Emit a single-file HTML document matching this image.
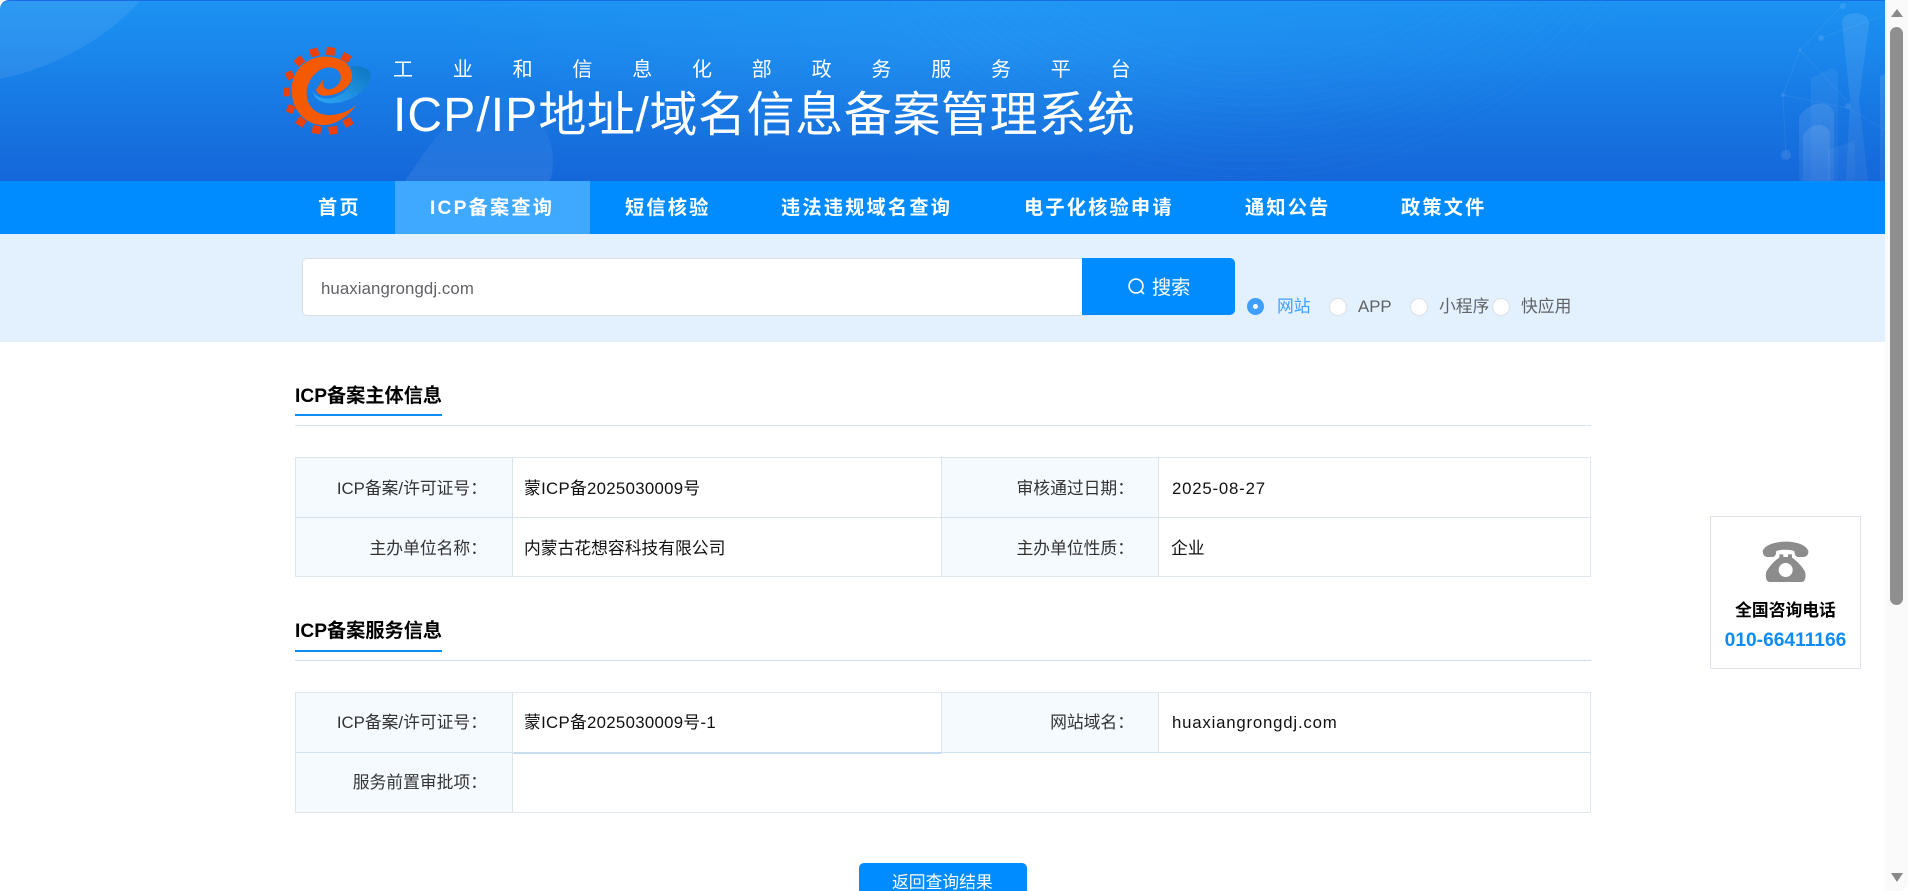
<!DOCTYPE html>
<html lang="zh-CN">
<head>
<meta charset="utf-8">
<title>ICP/IP地址/域名信息备案管理系统</title>
<style>
html,body{margin:0;padding:0;width:1908px;height:891px;overflow:hidden;background:#fff;}
body{position:relative;font-family:"Liberation Sans","Noto Sans CJK SC",sans-serif;color:#111;}
.a{position:absolute;white-space:nowrap;}
#hdr{left:0;top:0;width:1885px;height:181px;overflow:hidden;border-top-left-radius:9px;background:linear-gradient(180deg,#1b92f2 0%,#1a86ec 30%,#1775e1 65%,#1567d9 100%);border-top:1px solid #1a6ce2;box-sizing:border-box;}
#nav{left:0;top:181px;width:1885px;height:53px;background:#008cff;}
.n{top:181px;height:53px;line-height:55px;font-size:19.2px;font-weight:700;color:#fff;letter-spacing:2.2px;}
#band{left:0;top:234px;width:1885px;height:108px;background:#e3f1ff;}
.r{width:16px;height:16px;border-radius:50%;background:#fff;border:1px solid #dcdfe6;top:298px;}
.rl{top:295px;font-size:16.8px;line-height:24px;color:#606266;}
.t{font-size:19.2px;font-weight:700;color:#000;line-height:26px;}
.c{font-size:16.8px;line-height:24px;}
.lb{color:#333;text-align:right;}
.box{left:295px;width:1296px;box-sizing:border-box;}
.l{background:#dbe4ec;}
.v{letter-spacing:.3px;}
.m{letter-spacing:.8px;}
</style>
</head>
<body>
<div class="a" id="hdr">
<svg width="1885" height="181" style="position:absolute;left:0;top:-1px">
<defs>
<radialGradient id="glow" cx="0.5" cy="0.5" r="0.5"><stop offset="0" stop-color="#3fb4ff" stop-opacity=".18"/><stop offset="1" stop-color="#3fb4ff" stop-opacity="0"/></radialGradient>
<linearGradient id="fade" x1="0" y1="0" x2="0" y2="1"><stop offset="0" stop-color="#fff" stop-opacity=".1"/><stop offset="1" stop-color="#fff" stop-opacity=".05"/></linearGradient>
<linearGradient id="arc" x1="0" y1="0" x2="0" y2="1"><stop offset="0" stop-color="#fff" stop-opacity="0"/><stop offset="1" stop-color="#fff" stop-opacity=".08"/></linearGradient>
</defs>
<ellipse cx="-60" cy="-130" rx="252" ry="215" fill="#fff" fill-opacity=".08"/>
<path d="M405 181 C425 150 455 110 490 85 C530 100 553 130 553 160 C553 170 552 176 549 181Z" fill="url(#arc)"/>
<ellipse cx="1000" cy="40" rx="560" ry="120" fill="url(#glow)"/>
<g fill="none" stroke="#fff" stroke-opacity=".028" stroke-width="1">
<circle cx="1252" cy="-301" r="478"/><circle cx="1252" cy="-301" r="470"/><circle cx="1252" cy="-301" r="462"/><circle cx="1252" cy="-301" r="454"/><circle cx="1252" cy="-301" r="446"/><circle cx="1252" cy="-301" r="438"/><circle cx="1252" cy="-301" r="430"/><circle cx="1252" cy="-301" r="422"/><circle cx="1252" cy="-301" r="414"/><circle cx="1252" cy="-301" r="406"/><circle cx="1252" cy="-301" r="398"/><circle cx="1252" cy="-301" r="390"/><circle cx="1252" cy="-301" r="382"/><circle cx="1252" cy="-301" r="374"/><circle cx="1252" cy="-301" r="366"/><circle cx="1252" cy="-301" r="358"/>
</g>
<g fill="url(#fade)">
<path d="M1842 22 C1842 10 1870 10 1869 24 L1859 100 L1868 181 L1846 181 L1850 100Z"/>
<path d="M1811 78 L1832 68 L1838 72 L1838 181 L1811 181Z" fill-opacity=".5"/>
<path d="M1799 117 C1810 100 1830 100 1834 112 L1834 181 L1799 181Z"/>
<path d="M1803 135 C1812 122 1825 122 1830 132 L1830 181 L1803 181Z"/>
<path d="M1828 150 L1855 140 L1855 181 L1828 181Z" fill-opacity=".5"/>
<path d="M1880 76 L1885 74 L1885 181 L1880 181Z"/>
</g>
<g stroke="#fff" stroke-opacity=".06" fill="none">
<path d="M1783 95 L1800 50 L1843 5 M1800 50 L1846 100 M1783 95 L1786 155 M1783 95 L1848 108 L1885 130 M1821 38 L1885 15"/>
</g>
<g fill="#fff" fill-opacity=".1"><circle cx="1786" cy="155" r="5"/><circle cx="1821" cy="38" r="3"/><circle cx="1843" cy="6" r="3"/><circle cx="1848" cy="106" r="3"/><circle cx="1783" cy="95" r="2"/><circle cx="1800" cy="50" r="1.5"/></g>
</svg>
</div>

<svg class="a" style="left:260px;top:30px" width="160" height="120" viewBox="0 0 480 360">
<defs>
<linearGradient id="sw" x1="0" y1="1" x2="1" y2="0"><stop offset="0" stop-color="#2ea8f8"/><stop offset="1" stop-color="#0c74c0"/></linearGradient>
</defs>
<g fill="#e9400c">
<rect x="-13" y="-12" width="26" height="24" transform="translate(163 67) rotate(-15)"/>
<rect x="-13" y="-12" width="26" height="24" transform="translate(212 64) rotate(8)"/>
<rect x="-13" y="-12" width="26" height="24" transform="translate(258 83) rotate(30)"/>
<rect x="-13" y="-12" width="26" height="24" transform="translate(118 93) rotate(-40)"/>
<rect x="-11" y="-12" width="22" height="24" transform="translate(89 136) rotate(-25)"/>
<rect x="-10" y="-13" width="20" height="26" transform="translate(80 186) rotate(-3)"/>
<rect x="-11" y="-12" width="22" height="24" transform="translate(92 237) rotate(25)"/>
<rect x="-13" y="-12" width="26" height="24" transform="translate(123 276) rotate(35)"/>
<rect x="-13" y="-12" width="26" height="24" transform="translate(170 299) rotate(10)"/>
<rect x="-13" y="-12" width="26" height="24" transform="translate(219 301) rotate(-8)"/>
<rect x="-13" y="-12" width="26" height="24" transform="translate(264 277) rotate(-30)"/>
</g>
<path d="M272 108 C305 105 332 118 332 135 C332 170 280 218 215 220 C185 221 160 205 158 182 C165 200 185 208 210 205 C245 200 283 170 276 130Z" fill="url(#sw)"/>
<path d="M288 226 C262 262 222 287 185 285 C130 282 95 235 95 180 C95 125 135 80 195 80 C245 80 277 105 276 140 C275 170 235 197 195 197 C180 197 168 188 168 178 C175 170 183 160 190 147 C185 170 195 180 210 178 C235 172 248 150 240 130 C228 108 200 108 180 120 C155 135 138 165 140 195 C143 235 175 258 215 255 C245 252 270 240 288 226Z" fill="#f65a00"/>
</svg>

<div class="a" style="left:393px;top:56px;font-size:20px;line-height:28px;letter-spacing:39.8px;color:#fff;">工业和信息化部政务服务平台</div>
<div class="a" style="left:393px;top:80px;font-size:48px;line-height:72px;color:#fff;letter-spacing:.6px;"><span style="letter-spacing:1.1px">ICP/IP</span>地址/域名信息备案管理系统</div>

<div class="a" id="nav"></div>
<div class="a" style="left:395px;top:181px;width:195px;height:53px;background:#3fa9ff;"></div>
<div class="a n" style="left:318px">首页</div>
<div class="a n" style="left:430px">ICP备案查询</div>
<div class="a n" style="left:625px">短信核验</div>
<div class="a n" style="left:781px">违法违规域名查询</div>
<div class="a n" style="left:1024px">电子化核验申请</div>
<div class="a n" style="left:1245px">通知公告</div>
<div class="a n" style="left:1401px">政策文件</div>

<div class="a" id="band"></div>
<div class="a" style="left:302px;top:258px;width:790px;height:58px;box-sizing:border-box;background:#fff;border:1px solid #dcdfe6;border-radius:5px;"></div>
<div class="a" style="left:321px;top:277px;font-size:16.8px;line-height:24px;color:#606266;letter-spacing:.1px;">huaxiangrongdj.com</div>
<div class="a" style="left:1082px;top:258px;width:153px;height:57px;background:#008cff;border-radius:0 5px 5px 0;"></div>
<svg class="a" style="left:1127px;top:277px" width="20" height="20" viewBox="0 0 20 20" fill="none" stroke="#fff" stroke-width="1.6"><circle cx="9" cy="9" r="6.9"/><path d="M14 14 L16.5 16.5" stroke-linecap="round"/></svg>
<div class="a" style="left:1152px;top:275px;font-size:19.2px;line-height:28px;color:#fff;">搜索</div>

<div class="a r" style="left:1247px;width:17px;height:17px;background:#409eff;border:0;"></div>
<div class="a" style="left:1253px;top:304px;width:5px;height:5px;border-radius:50%;background:#fff;"></div>
<div class="a rl" style="left:1277px;color:#409eff;">网站</div>
<div class="a r" style="left:1329px"></div>
<div class="a rl" style="left:1358px;">APP</div>
<div class="a r" style="left:1410px"></div>
<div class="a rl" style="left:1439px;">小程序</div>
<div class="a r" style="left:1492px"></div>
<div class="a rl" style="left:1521px;">快应用</div>

<!-- Section 1 -->
<div class="a t" style="left:295px;top:384px;">ICP备案主体信息</div>
<div class="a" style="left:295px;top:414px;width:147px;height:2px;background:#0d8cf5;"></div>
<div class="a l" style="left:295px;top:425px;width:1296px;height:1px;"></div>
<div class="a box" style="top:457px;height:120px;border:1px solid #dfe6ec;"></div>
<div class="a" style="left:296px;top:458px;width:216px;height:118px;background:#f5faff;"></div>
<div class="a" style="left:942px;top:458px;width:216px;height:118px;background:#f5faff;"></div>
<div class="a l" style="left:296px;top:517px;width:1294px;height:1px;background:#d6e2ee;"></div>
<div class="a l" style="left:512px;top:458px;width:1px;height:118px;"></div>
<div class="a l" style="left:941px;top:458px;width:1px;height:118px;"></div>
<div class="a l" style="left:1158px;top:458px;width:1px;height:118px;"></div>
<div class="a c lb" style="right:1421px;top:477px;">ICP备案/许可证号：</div>
<div class="a c v" style="left:524px;top:477px;">蒙ICP备2025030009号</div>
<div class="a c lb" style="right:774px;top:477px;">审核通过日期：</div>
<div class="a c m" style="left:1172px;top:477px;">2025-08-27</div>
<div class="a c lb" style="right:1421px;top:537px;">主办单位名称：</div>
<div class="a c" style="left:524px;top:537px;">内蒙古花想容科技有限公司</div>
<div class="a c lb" style="right:774px;top:537px;">主办单位性质：</div>
<div class="a c" style="left:1171px;top:537px;">企业</div>

<!-- Section 2 -->
<div class="a t" style="left:295px;top:619px;">ICP备案服务信息</div>
<div class="a" style="left:295px;top:650px;width:147px;height:2px;background:#0d8cf5;"></div>
<div class="a l" style="left:295px;top:660px;width:1296px;height:1px;background:#c9e0f3;"></div>
<div class="a box" style="top:692px;height:121px;border:1px solid #dfe6ec;"></div>
<div class="a" style="left:296px;top:693px;width:216px;height:119px;background:#f5faff;"></div>
<div class="a" style="left:942px;top:693px;width:216px;height:60px;background:#f5faff;"></div>
<div class="a l" style="left:296px;top:752px;width:1294px;height:1px;background:#cfe2f1;"></div>
<div class="a l" style="left:513px;top:752px;width:429px;height:2px;background:#c9dff0;"></div>
<div class="a l" style="left:512px;top:693px;width:1px;height:119px;"></div>
<div class="a l" style="left:941px;top:693px;width:1px;height:60px;"></div>
<div class="a l" style="left:1158px;top:693px;width:1px;height:60px;"></div>
<div class="a c lb" style="right:1421px;top:711px;">ICP备案/许可证号：</div>
<div class="a c v" style="left:524px;top:711px;">蒙ICP备2025030009号-1</div>
<div class="a c lb" style="right:774px;top:711px;">网站域名：</div>
<div class="a c m" style="left:1172px;top:711px;">huaxiangrongdj.com</div>
<div class="a c lb" style="right:1421px;top:771px;">服务前置审批项：</div>

<div class="a" style="left:859px;top:863px;width:168px;height:40px;background:#008cff;border-radius:5px 5px 0 0;"></div>
<div class="a" style="left:892px;top:871px;font-size:16.8px;line-height:24px;color:#fff;">返回查询结果</div>

<!-- Phone widget -->
<div class="a" style="left:1710px;top:516px;width:151px;height:153px;box-sizing:border-box;border:1px solid #dfe3ee;background:#fff;"></div>
<svg class="a" style="left:1750px;top:531px" width="73" height="60" viewBox="180 90 219 180">
<path fill="#8c8c8c" d="M218 150 C225 130 260 122 287 122 C315 122 348 130 355 150 C356 160 350 168 340 168 L325 168 C316 168 314 160 313 150 C300 145 272 145 259 150 C258 160 256 168 247 168 L232 168 C224 168 218 160 218 150Z"/>
<path fill="#8c8c8c" d="M268 160 L268 170 C255 178 238 195 229 212 C226 222 226 243 240 243 L334 243 C348 243 348 222 345 212 C336 195 318 178 306 170 L306 160 L294 160 L294 168 L280 168 L280 160Z"/>
<circle cx="287" cy="207" r="21" fill="#fff"/>
</svg>
<div class="a" style="left:1710px;top:599px;width:151px;text-align:center;font-size:16.8px;font-weight:700;line-height:24px;color:#000;">全国咨询电话</div>
<div class="a" style="left:1710px;top:629px;width:151px;text-align:center;font-size:19.2px;font-weight:700;line-height:24px;color:#0d8cf5;">010-66411166</div>

<!-- Scrollbar -->
<div class="a" style="left:1885px;top:0;width:23px;height:891px;background:#fafafa;border-bottom-right-radius:9px;"></div>
<svg class="a" style="left:1885px;top:0" width="23" height="891">
<path d="M12 9 L18 17 L6 17Z" fill="#8a8a8a"/>
<rect x="5" y="27" width="13" height="578" rx="6.5" fill="#8f8f8f"/>
<path d="M6 873 L18 873 L12 882Z" fill="#8a8a8a"/>
</svg>
</body>
</html>
